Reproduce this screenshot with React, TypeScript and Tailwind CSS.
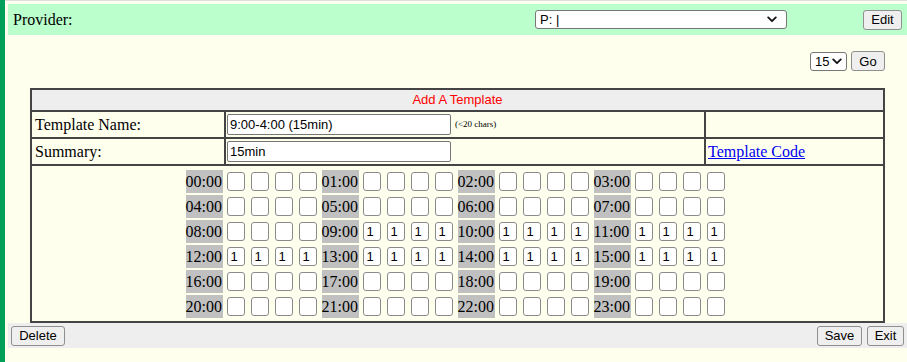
/**
 * Template editor: provider bar, interval picker and hourly slot grid.
 */

const serif = "font-['Liberation_Serif',serif]";
const sans = "font-['Liberation_Sans',Arial,sans-serif]";

const HOURS = Array.from({ length: 24 }, (_, h) => h);
const FILLED = new Set([9, 10, 11, 12, 13, 14, 15]);

function pad(n: number) {
  return n < 10 ? `0${n}` : `${n}`;
}

function Chevron() {
  return (
    <svg width="10" height="7" viewBox="0 0 10 7" className="shrink-0">
      <path d="M1.2 1.4 5 5.2 8.8 1.4" fill="none" stroke="#111" strokeWidth="1.8" strokeLinecap="round" strokeLinejoin="round" />
    </svg>
  );
}

function Btn({ label, className = "" }: { label: string; className?: string }) {
  return (
    <button
      type="button"
      className={`h-[20px] rounded-[3px] border border-[#8f8f8f] bg-[#efefef] px-[6px] text-[13px] leading-none text-black ${sans} ${className}`}
    >
      {label}
    </button>
  );
}

function Slot({ value }: { value: string }) {
  return (
    <div className="w-[24px]">
      <input
        readOnly
        value={value}
        className={`ml-[1px] block h-[19px] w-[18px] rounded-[3px] border border-[#8a8a8a] bg-white pl-[3px] text-[13px] leading-none text-black outline-none ${sans}`}
      />
    </div>
  );
}

function HourBlock({ hour }: { hour: number }) {
  const v = FILLED.has(hour) ? "1" : "";
  return (
    <div className="flex w-[136px] items-center">
      <div className={`h-[23px] w-[37px] bg-[#c0c0c0] text-[16px] leading-[23px] text-black ${serif}`}>
        {pad(hour)}:00
      </div>
      <div className="flex pl-[3px]">
        <Slot value={v} />
        <Slot value={v} />
        <Slot value={v} />
        <Slot value={v} />
      </div>
    </div>
  );
}

export default function App() {
  const rows = [0, 1, 2, 3, 4, 5].map((r) => HOURS.slice(r * 4, r * 4 + 4));

  return (
    <div className="flex h-[362px] w-[907px] overflow-hidden bg-[#ffffee]">
      <div className="w-[5px] shrink-0 bg-[#00a05a]" />
      <div className="flex flex-1 flex-col border-t border-[#dddddd]">
        <div className="ml-[3px] mt-[3px] flex h-[31px] items-center bg-[#bbffcc] pl-[5px] pr-[5px]">
          <span className={`flex-1 text-[16px] text-black ${serif}`}>Provider:</span>
          <div className="mr-[76px] flex h-[19px] w-[252px] items-center justify-between rounded-[3px] border border-[#767676] bg-white pl-[4px] pr-[9px]">
            <span className={`text-[13px] leading-none text-black ${sans}`}>P: |</span>
            <Chevron />
          </div>
          <Btn label="Edit" className="w-[39px]" />
        </div>

        <div className="ml-[3px] flex flex-col">
          <div className="mx-auto mt-[16px] flex w-[855px] justify-end gap-[4px]">
            <div className="mt-[1px] flex h-[19px] w-[37px] items-center justify-between rounded-[3px] border border-[#767676] bg-white pl-[4px] pr-[4px]">
              <span className={`text-[13px] leading-none text-black ${sans}`}>15</span>
              <Chevron />
            </div>
            <Btn label="Go" className="w-[34px]" />
          </div>

          <table className="mx-auto mt-[17px] w-[855px] border-collapse border-2 border-[#444444]">
            <tbody>
              <tr className="h-[22px] bg-[#eeeeee]">
                <td colSpan={3} className={`border-2 border-[#444444] p-0 text-center text-[13px] text-[#ff0000] ${sans}`}>
                  Add A Template
                </td>
              </tr>
              <tr className="h-[27px]">
                <td className={`w-[194px] border-2 border-[#444444] px-[3px] py-0 text-[16px] text-black ${serif}`}>
                  Template Name:
                </td>
                <td className="w-[480px] border-2 border-[#444444] py-0 pl-[1px]">
                  <div className="flex items-center">
                    <input
                      readOnly
                      value="9:00-4:00 (15min)"
                      className={`h-[21px] w-[224px] rounded-[2px] border border-[#767676] bg-white px-[2px] text-[13px] text-black outline-none ${sans}`}
                    />
                    <span className={`ml-[4px] text-[9px] text-black ${serif}`}>(&lt;20 chars)</span>
                  </div>
                </td>
                <td className="border-2 border-[#444444] p-0" />
              </tr>
              <tr className="h-[27px]">
                <td className={`border-2 border-[#444444] px-[3px] py-0 text-[16px] text-black ${serif}`}>Summary:</td>
                <td className="border-2 border-[#444444] py-0 pl-[1px]">
                  <input
                    readOnly
                    value="15min"
                    className={`block h-[21px] w-[224px] rounded-[2px] border border-[#767676] bg-white px-[2px] text-[13px] text-black outline-none ${sans}`}
                  />
                </td>
                <td className="border-2 border-[#444444] px-[2px] py-0">
                  <a href="#" className={`text-[16px] text-[#0000ee] underline ${serif}`}>
                    Template Code
                  </a>
                </td>
              </tr>
              <tr>
                <td colSpan={3} className="border-2 border-[#444444] pb-[3px] pt-[4px]">
                  <div className="mx-auto flex w-[544px] flex-col gap-[2px]">
                    {rows.map((row, i) => (
                      <div key={i} className="flex">
                        {row.map((h) => (
                          <HourBlock key={h} hour={h} />
                        ))}
                      </div>
                    ))}
                  </div>
                </td>
              </tr>
            </tbody>
          </table>

          <div className="flex h-[25px] items-center bg-[#eeeeee] pl-[3px] pr-[3px]">
            <Btn label="Delete" className="w-[54px]" />
            <div className="ml-auto flex gap-[5px]">
              <Btn label="Save" className="w-[45px]" />
              <Btn label="Exit" className="w-[37px]" />
            </div>
          </div>
        </div>
      </div>
    </div>
  );
}
